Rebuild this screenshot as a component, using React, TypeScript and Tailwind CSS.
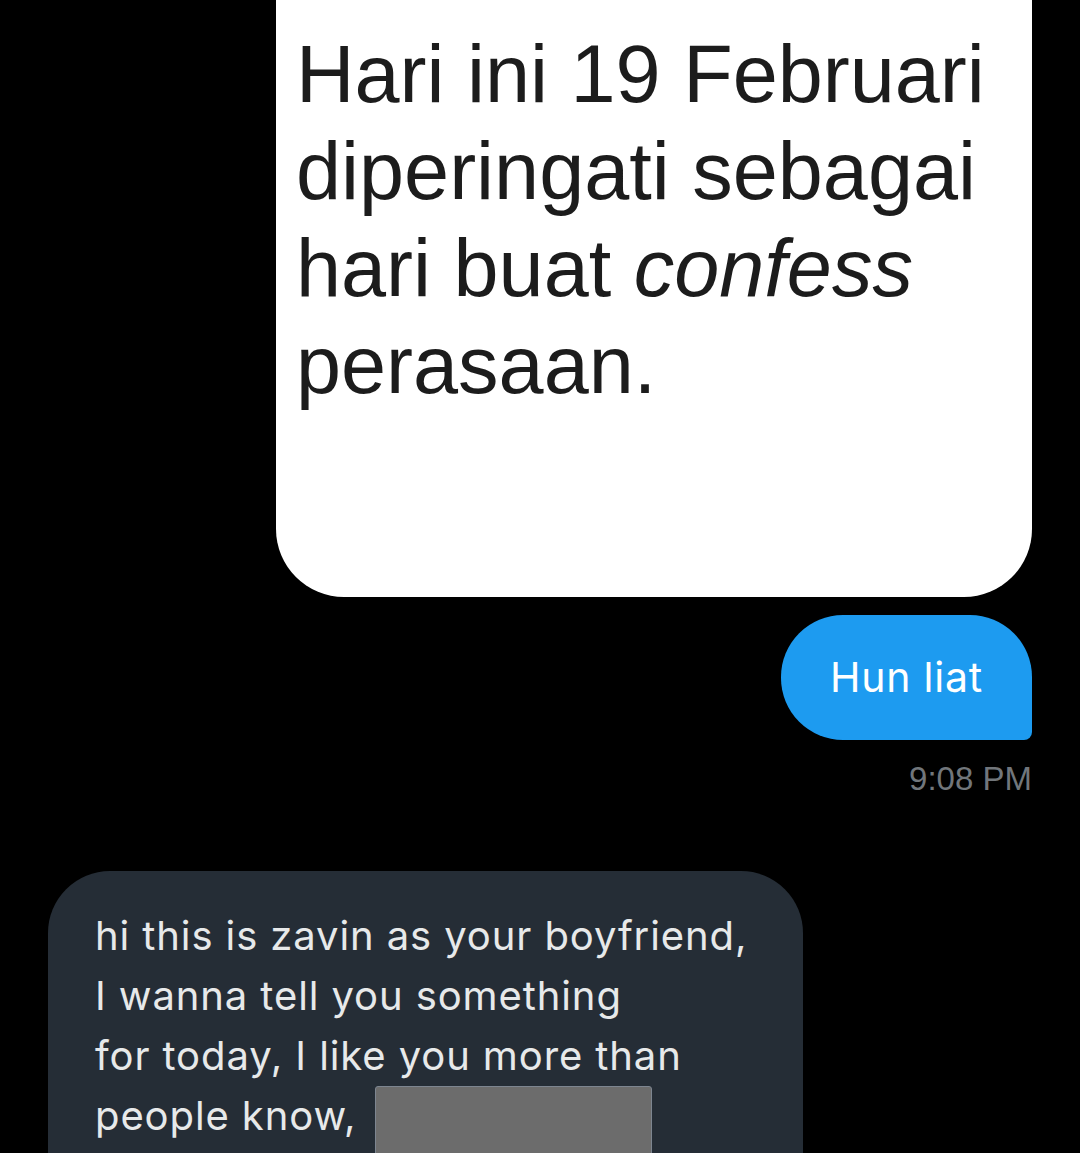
export default function App() {
  return (
    <div className="h-[1153px] w-[1080px] overflow-hidden bg-black">
      <div className="flex flex-col items-end px-[48px]">
        <div
          className="w-[756px] rounded-b-[68px] bg-white pb-[183px] pl-[20px] pt-[26px] text-[81px] leading-[97px] text-[#1c1c1c]"
          style={{ fontFamily: '"Liberation Sans", Arial, sans-serif' }}
        >
          Hari ini 19 Februari
          <br />
          diperingati sebagai
          <br />
          hari buat <i>confess</i>
          <br />
          perasaan.
        </div>
        <div
          className="mt-[18px] flex h-[125px] w-[251px] items-center justify-center rounded-l-[62px] rounded-br-[8px] rounded-tr-[62px] bg-[#1d9bf0] text-[41px] tracking-[0.8px] text-white"
          style={{ fontFamily: 'Inter, "Noto Sans", sans-serif' }}
        >
          Hun liat
        </div>
        <div
          className="mt-[20px] text-[33px] leading-[38px] text-[#71767b]"
          style={{ fontFamily: '"Liberation Sans", Arial, sans-serif' }}
        >
          9:08 PM
        </div>
      </div>
      <div className="mt-[73px] px-[48px]">
        <div
          className="w-[755px] rounded-t-[62px] bg-[#252d36] pb-[40px] pl-[47px] pt-[35px] text-[40px] leading-[60px] tracking-[0.9px] text-[#e7e9ea]"
          style={{ fontFamily: 'Inter, "Noto Sans", sans-serif' }}
        >
          hi this is zavin as your boyfriend,
          <br />
          I wanna tell you something
          <br />
          for today, I like you more than
          <br />
          people know,{" "}
          <span className="ml-[6px] inline-block h-[72px] w-[277px] rounded-[3px] border border-[#7d8590] bg-[#6c6c6c] align-top" />
        </div>
      </div>
    </div>
  );
}
